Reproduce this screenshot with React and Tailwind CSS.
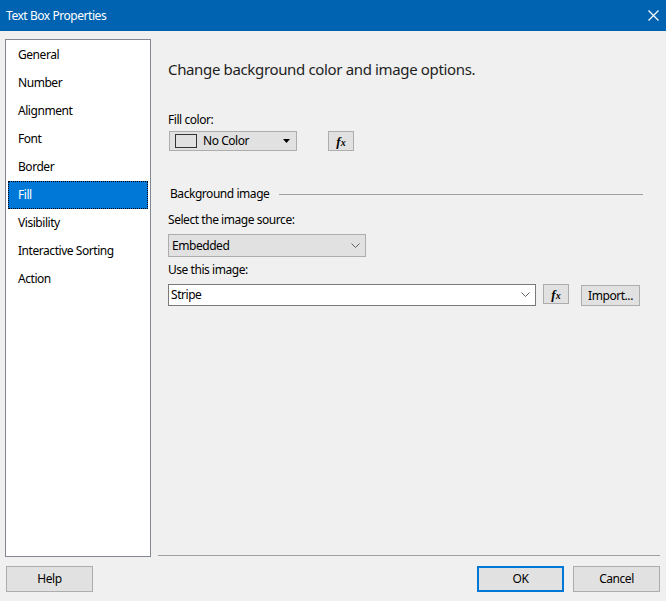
import React from "react";

const items = ["General","Number","Alignment","Font","Border","Fill","Visibility","Interactive Sorting","Action"];

function Fx() {
  return (
    <span className="font-['Liberation_Serif',serif] italic font-bold text-[13px] leading-none text-black tracking-normal">
      f<span className="text-[10px]">x</span>
    </span>
  );
}

function Chevron() {
  return (
    <svg width="9" height="6" viewBox="0 0 9 6" className="shrink-0">
      <path d="M0.5 0.5 L4.5 4.5 L8.5 0.5" fill="none" stroke="#606060" strokeWidth="1" />
    </svg>
  );
}

export default function App() {
  return (
    <div className="w-[666px] h-[601px] bg-[#f0f0f0] flex flex-col font-['Noto_Sans',sans-serif] text-[12px] tracking-[-0.45px] text-black overflow-hidden">
      <div className="h-[31px] shrink-0 bg-[#0063b1] flex items-center justify-between pl-[6px] pr-[7px] text-white text-[12px]">
        <span>Text Box Properties</span>
        <svg width="11" height="11" viewBox="0 0 11 11">
          <path d="M0.5 0.5 L10.5 10.5 M10.5 0.5 L0.5 10.5" stroke="white" strokeWidth="1.2" />
        </svg>
      </div>
      <div className="flex pl-[5px] pt-[8px]">
        <div className="w-[146px] h-[518px] shrink-0 border border-[#828790] bg-white p-px">
          {items.map((it) => (
            <div
              key={it}
              className={
                it === "Fill"
                  ? "h-[28px] mx-px bg-[#0078d7] text-white border border-dotted border-black flex items-center pl-[9px]"
                  : "h-[28px] flex items-center pl-[11px]"
              }
            >
              {it}
            </div>
          ))}
        </div>
        <div className="flex-1 ml-[7px] mr-[6px] h-[518px] flex flex-col">
          <div className="flex-1 flex flex-col pl-[10px]">
            <div className="mt-[20px] h-[20px] leading-[20px] text-[15px] tracking-[-0.35px] text-[#1e1e1e]">Change background color and image options.</div>
            <div className="mt-[33px] h-[16px] leading-[16px]">Fill color:</div>
            <div className="mt-[3px] flex items-center">
              <div className="ml-px w-[128px] h-[20px] bg-[#e1e1e1] border border-[#adadad] flex items-center pl-[5px] pr-[6px]">
                <div className="w-[22px] h-[14px] border border-[#333]"></div>
                <span className="ml-[6px] flex-1">No Color</span>
                <svg width="7" height="4" viewBox="0 0 7 4"><path d="M0 0 L7 0 L3.5 4 Z" fill="#000" /></svg>
              </div>
              <div className="ml-[31px] w-[26px] h-[20px] bg-[#e1e1e1] border border-[#adadad] flex items-center justify-center">
                <Fx />
              </div>
            </div>
            <div className="mt-[35px] h-[16px] flex items-center pr-[17px]">
              <span className="ml-[2px] leading-[16px]">Background image</span>
              <div className="flex-1 ml-[10px] h-px bg-[#a0a0a0]"></div>
            </div>
            <div className="mt-[10px] h-[16px] leading-[16px]">Select the image source:</div>
            <div className="mt-[6px] w-[198px] h-[23px] bg-[#e1e1e1] border border-[#adadad] flex items-center pl-[3px] pr-[5px]">
              <span className="flex-1">Embedded</span>
              <Chevron />
            </div>
            <div className="mt-[5px] h-[16px] leading-[16px]">Use this image:</div>
            <div className="mt-[6px] flex items-start">
              <div className="w-[368px] h-[22px] bg-white border border-[#7a7a7a] flex items-center pl-[2px] pr-[5px]">
                <span className="flex-1">Stripe</span>
                <Chevron />
              </div>
              <div className="ml-[7px] w-[26px] h-[20px] bg-[#e1e1e1] border border-[#adadad] flex items-center justify-center">
                <Fx />
              </div>
              <div className="ml-[12px] mt-px w-[59px] h-[21px] bg-[#e1e1e1] border border-[#adadad] flex items-center justify-center">
                Import...
              </div>
            </div>
          </div>
          <div className="h-px bg-[#a0a0a0] mb-px"></div>
        </div>
      </div>
      <div className="mt-[9px] flex px-[6px]">
        <div className="w-[87px] h-[26px] bg-[#e1e1e1] border border-[#adadad] flex items-center justify-center">Help</div>
        <div className="flex-1"></div>
        <div className="w-[87px] h-[26px] bg-[#e1e1e1] border-2 border-[#0078d7] flex items-center justify-center">OK</div>
        <div className="ml-[9px] w-[87px] h-[26px] bg-[#e1e1e1] border border-[#adadad] flex items-center justify-center">Cancel</div>
      </div>
    </div>
  );
}
